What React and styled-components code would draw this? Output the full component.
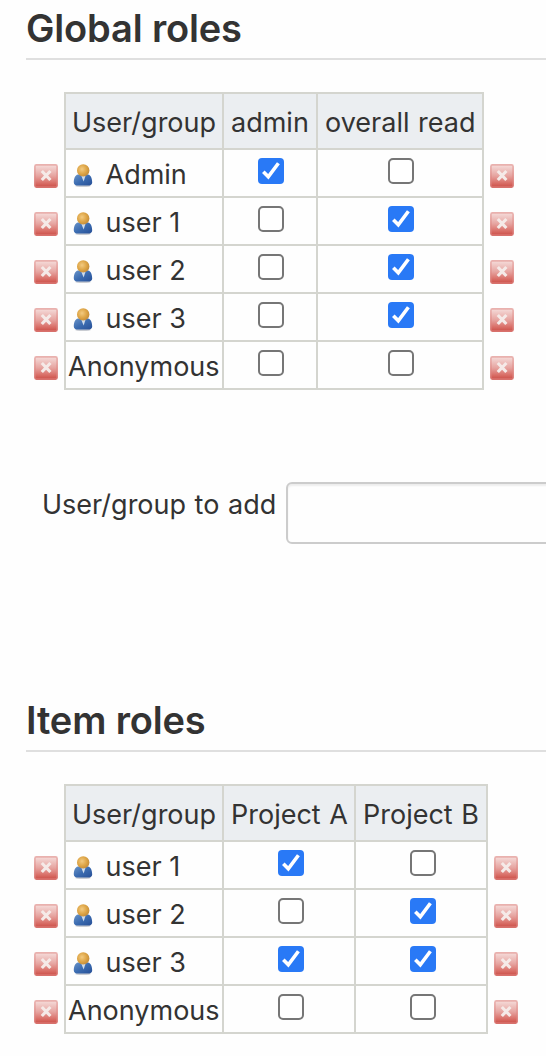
import React, { useState } from 'react';
import styled, { createGlobalStyle } from 'styled-components';

const GlobalStyle = createGlobalStyle`
  * { box-sizing: border-box; }
  body {
    margin: 0;
    background: #fefefe;
    color: #333;
    font-family: Inter, "Liberation Sans", sans-serif;
    font-size: 27px;
    overflow: hidden;
  }
`;

const Page = styled.main`
  width: 546px;
  height: 1056px;
  padding-left: 26px;
  overflow: hidden;
`;

const Section = styled.section`
  height: ${(p) => p.$height}px;
`;

const Heading = styled.h2`
  margin: 0;
  height: 60px;
  padding-top: 8px;
  border-bottom: 2px solid #dfdfdf;
  font-size: 38px;
  font-weight: 600;
  line-height: 40px;
  letter-spacing: -0.15px;
  white-space: nowrap;
`;

const Matrix = styled.div`
  display: grid;
  grid-template-columns: 38px ${(p) => p.$columns} 40px;
  grid-auto-rows: 48px;
  grid-template-rows: 56px;
  width: max-content;
  margin-top: 32px;
`;

const Cell = styled.div`
  display: flex;
  align-items: flex-start;
  border-style: solid;
  border-color: #d4d5cf;
  border-width: 2px 0 0 2px;
  margin-right: ${(p) => (p.$last ? -2 : 0)}px;
  border-right-width: ${(p) => (p.$last ? 2 : 0)}px;
  margin-bottom: ${(p) => (p.$bottom ? -2 : 0)}px;
  border-bottom-width: ${(p) => (p.$bottom ? 2 : 0)}px;
  white-space: nowrap;
`;

const HeaderCell = styled(Cell)`
  padding: 12px 0 0 ${(p) => (p.$role ? 7 : 6)}px;
  background: #ebeef1;
  line-height: 34px;
  word-spacing: 1px;
`;

const NameCell = styled(Cell)`
  padding: 8px 0 0 ${(p) => (p.$icon ? 7 : 2)}px;
  line-height: 34px;
`;

const CheckCell = styled(Cell)`
  padding: 8px 0 0 ${(p) => p.$inset}px;
`;

const RemoveSlot = styled.div`
  padding: 16px 0 0 8px;
`;

const RemoveButton = styled.button`
  display: block;
  width: 24px;
  height: 24px;
  padding: 0;
  border: 0;
  background: none;
`;

const RemoveGlyph = styled.svg`
  display: block;
  overflow: visible;
  filter: blur(0.6px);
`;

const UserGlyph = styled.svg`
  flex: none;
  width: 20px;
  height: 24px;
  margin: 5px 12.5px 0 0;
  overflow: visible;
  filter: blur(0.6px);
`;

const Check = styled.button`
  flex: none;
  width: 26px;
  height: 26px;
  padding: 0;
  border: ${(p) => (p.$on ? '0' : '2px solid #767676')};
  border-radius: ${(p) => (p.$on ? 4 : 5)}px;
  background: ${(p) => (p.$on ? '#2979f6' : '#fff')};

  svg { display: block; }
`;

const AddForm = styled.label`
  display: flex;
  height: 62px;
  margin-top: 94px;
  padding-left: 16px;
  line-height: 46px;
  white-space: nowrap;
`;

const AddLabel = styled.span`
  flex: none;
  width: 244px;
  word-spacing: 1px;
`;

const AddInput = styled.input`
  flex: none;
  width: 320px;
  height: 62px;
  padding: 0 12px;
  border: 2px solid #ccc;
  border-radius: 6px;
  background: #fefefe;
  font: inherit;
  outline: none;
  box-shadow: inset 0 2px 2px rgba(0, 0, 0, 0.07);
`;

function RemoveIcon() {
  return (
    <RemoveGlyph width="24" height="24" viewBox="0 0 24 24">
      <defs>
        <linearGradient id="removeFill" x1="0" y1="0" x2="0" y2="1">
          <stop offset="0" stopColor="#f5dcda" />
          <stop offset="0.5" stopColor="#e6a39f" />
          <stop offset="0.8" stopColor="#da716a" />
          <stop offset="1" stopColor="#cc4f48" />
        </linearGradient>
        <linearGradient id="removeEdge" x1="0" y1="0" x2="0" y2="1">
          <stop offset="0" stopColor="#e9b1ae" />
          <stop offset="1" stopColor="#d8716c" />
        </linearGradient>
      </defs>
      <rect x="0.9" y="0.9" width="22.2" height="22.2" rx="1.5" fill="url(#removeFill)" stroke="url(#removeEdge)" strokeWidth="1.6" />
      <path d="M7.8 7l8.6 9M16.4 7L7.8 16" stroke="#f5eae8" strokeWidth="3.2" />
    </RemoveGlyph>
  );
}

function UserIcon() {
  return (
    <UserGlyph viewBox="0 0 20 24">
      <defs>
        <radialGradient id="userHead" cx="0.4" cy="0.4" r="0.65">
          <stop offset="0" stopColor="#f3ca80" />
          <stop offset="0.6" stopColor="#dda445" />
          <stop offset="1" stopColor="#c08a3c" />
        </radialGradient>
        <linearGradient id="userBody" x1="0" y1="0" x2="1" y2="1">
          <stop offset="0" stopColor="#6a94c8" />
          <stop offset="0.5" stopColor="#3b6bb0" />
          <stop offset="1" stopColor="#274f96" />
        </linearGradient>
      </defs>
      <ellipse cx="10" cy="22.8" rx="8" ry="1.2" fill="#c9ccd2" />
      <path d="M0.8 19.5C0.8 15.5 2 12 5 11.4h10c3 .6 4.2 4.1 4.2 8.1 0 2-1.6 3.1-4 3.1H4.8c-2.4 0-4-1.1-4-3.1z" fill="url(#userBody)" />
      <path d="M8.2 12.5h4.4L10.6 18.5z" fill="#cfdceb" />
      <circle cx="10.2" cy="7.4" r="6.2" fill="url(#userHead)" />
    </UserGlyph>
  );
}

function Checkbox({ initial }) {
  const [on, setOn] = useState(initial);
  return (
    <Check type="button" role="checkbox" aria-checked={on} $on={on} onClick={() => setOn(!on)}>
      {on && (
        <svg width="26" height="26" viewBox="0 0 26 26">
          <path d="M5.3 13.8l5 5L20.4 5.2" fill="none" stroke="#fff" strokeWidth="3.6" />
        </svg>
      )}
    </Check>
  );
}

function Remove() {
  return (
    <RemoveSlot>
      <RemoveButton type="button" aria-label="Remove">
        <RemoveIcon />
      </RemoveButton>
    </RemoveSlot>
  );
}

function RoleMatrix({ columns, insets, roles, rows }) {
  return (
    <Matrix $columns={columns}>
      <div />
      <HeaderCell>User/group</HeaderCell>
      {roles.map((role, i) => (
        <HeaderCell key={role} $role $last={i === roles.length - 1}>{role}</HeaderCell>
      ))}
      <div />
      {rows.map(([name, ...checks], r) => {
        const bottom = r === rows.length - 1;
        const icon = name !== 'Anonymous';
        return (
          <React.Fragment key={name}>
            <Remove />
            <NameCell $icon={icon} $bottom={bottom}>
              {icon && <UserIcon />}
              {name}
            </NameCell>
            {checks.map((on, i) => (
              <CheckCell key={i} $inset={insets[i]} $last={i === checks.length - 1} $bottom={bottom}>
                <Checkbox initial={on} />
              </CheckCell>
            ))}
            <Remove />
          </React.Fragment>
        );
      })}
    </Matrix>
  );
}

export default function App() {
  return (
    <Page>
      <GlobalStyle />
      <Section $height={692}>
        <Heading>Global roles</Heading>
        <RoleMatrix
          columns="158px 94px 166px"
          insets={[34, 70]}
          roles={['admin', 'overall read']}
          rows={[
            ['Admin', true, false],
            ['user 1', false, true],
            ['user 2', false, true],
            ['user 3', false, true],
            ['Anonymous', false, false],
          ]}
        />
        <AddForm>
          <AddLabel>User/group to add</AddLabel>
          <AddInput />
        </AddForm>
      </Section>
      <Section $height={364}>
        <Heading>Item roles</Heading>
        <RoleMatrix
          columns="158px 132px 132px"
          insets={[54, 54]}
          roles={['Project A', 'Project B']}
          rows={[
            ['user 1', true, false],
            ['user 2', false, true],
            ['user 3', true, true],
            ['Anonymous', false, false],
          ]}
        />
      </Section>
    </Page>
  );
}
